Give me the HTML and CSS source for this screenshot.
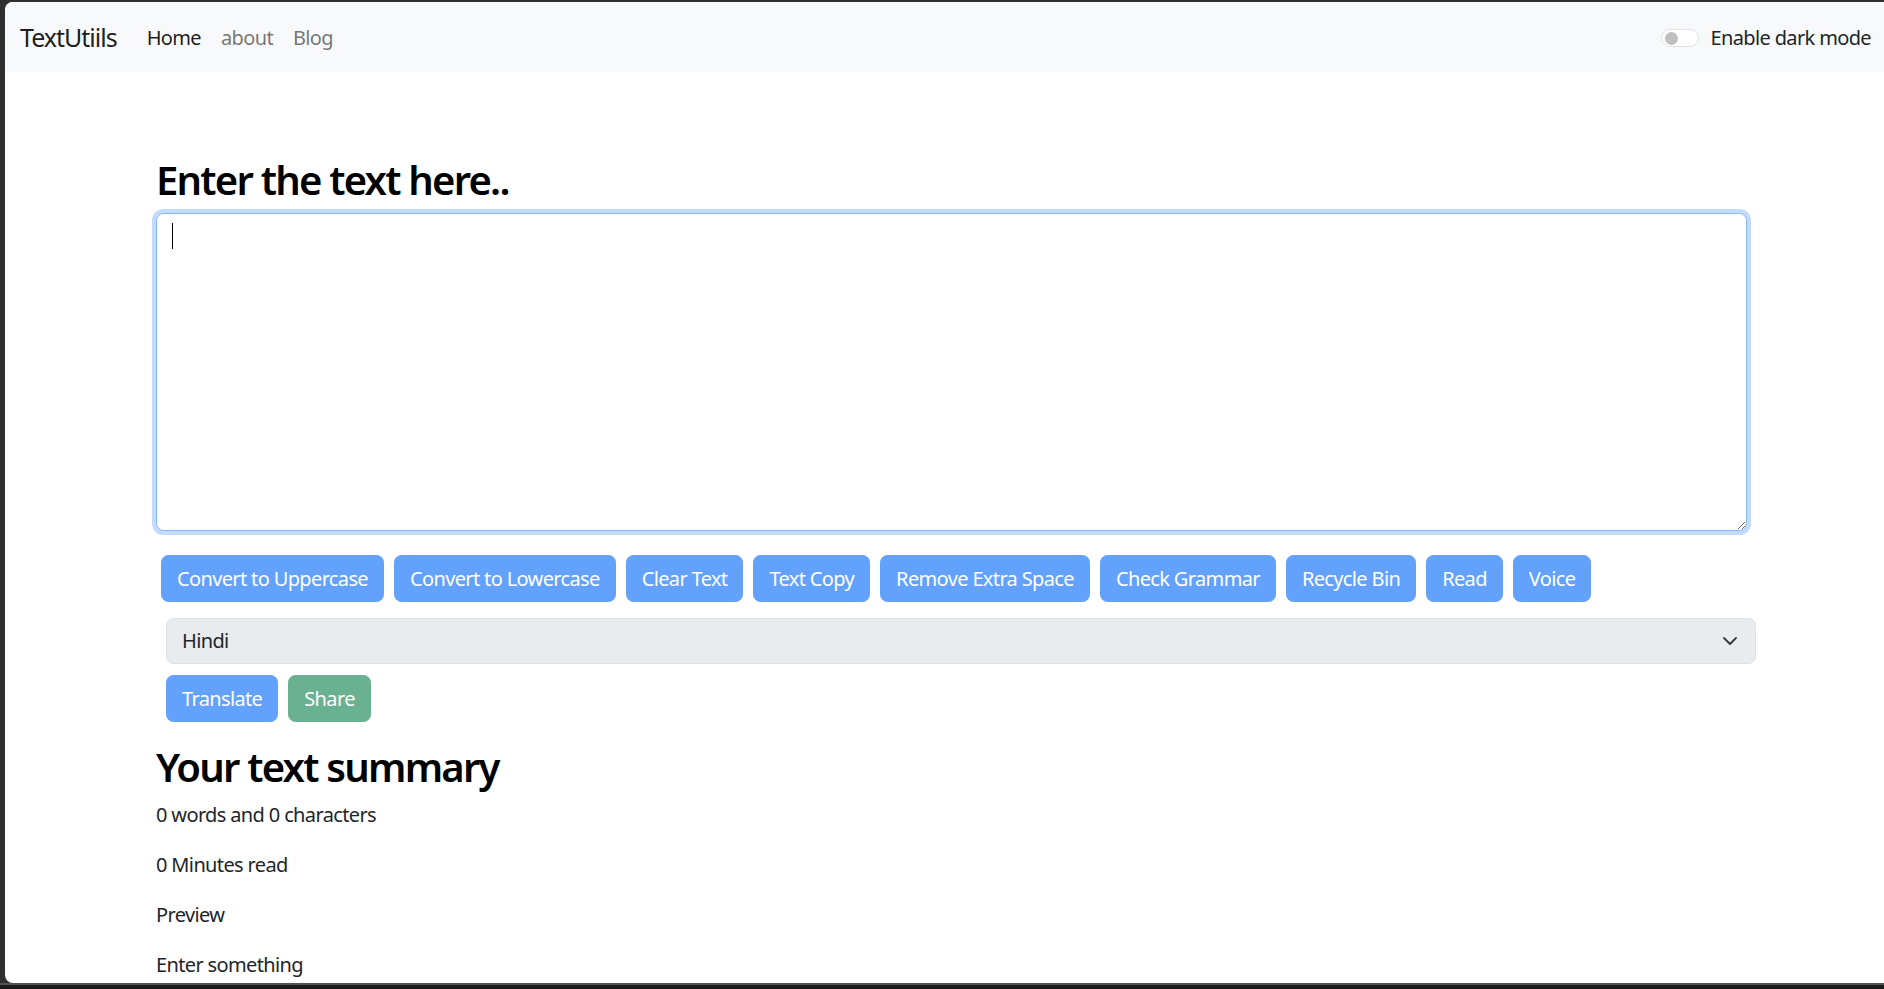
FILE: index.html
```html
<!DOCTYPE html>
<html lang="en">
<head>
<meta charset="utf-8">
<title>TextUtiils</title>
<link rel="stylesheet" href="styles.css">
</head>
<body>
<div class="window">
  <nav class="navbar">
    <div class="nav-left">
      <a class="brand" href="#">TextUtiils</a>
      <ul class="nav-links">
        <li><a class="active" href="#">Home</a></li>
        <li><a href="#">about</a></li>
        <li><a href="#">Blog</a></li>
      </ul>
    </div>
    <div class="dark-toggle">
      <span class="switch"><span class="knob"></span></span>
      <label class="switch-label">Enable dark mode</label>
    </div>
  </nav>
  <main class="container">
    <h2 class="title">Enter the text here..</h2>
    <div class="ta-wrap">
      <textarea class="ta" rows="10"></textarea>
      <span class="caret"></span>
    </div>
    <div class="btn-row">
      <button class="btn" disabled>Convert to Uppercase</button>
      <button class="btn" disabled>Convert to Lowercase</button>
      <button class="btn" disabled>Clear Text</button>
      <button class="btn" disabled>Text Copy</button>
      <button class="btn" disabled>Remove Extra Space</button>
      <button class="btn" disabled>Check Grammar</button>
      <button class="btn" disabled>Recycle Bin</button>
      <button class="btn" disabled>Read</button>
      <button class="btn" disabled>Voice</button>
    </div>
    <div class="select-wrap">
      <select class="select" disabled><option>Hindi</option></select>
      <svg class="chev" width="14" height="8" viewBox="0 0 14 8"><path d="M1 1 L7 7 L13 1" fill="none" stroke="#343a40" stroke-width="1.8" stroke-linecap="round" stroke-linejoin="round"/></svg>
    </div>
    <div class="btn-row2">
      <button class="btn" disabled>Translate</button>
      <button class="btn btn-green" disabled>Share</button>
    </div>
    <h2 class="title summary">Your text summary</h2>
    <p>0 words and 0 characters</p>
    <p>0 Minutes read</p>
    <p>Preview</p>
    <p>Enter something</p>
  </main>
</div>
<div class="bottom-bar"></div>
</body>
</html>
```
FILE: styles.css
```css
* { box-sizing: border-box; }
html, body { margin: 0; height: 100%; }
body {
  background: #2f2f2f;
  overflow: hidden;
  padding: 2px 0 0 5px;
  font-family: "Noto Sans", "Open Sans", sans-serif;
  font-size: 20px;
  line-height: 1.5;
  color: #212529;
  letter-spacing: -0.032em;
}
.window {
  height: 981px;
  background: #fff;
  border-radius: 8px 0 0 8px;
  overflow: hidden;
}
.bottom-bar {
  height: 6px;
  margin-left: -5px;
  border-top: 2px solid #525252;
  background: #1b1b1b;
}
.navbar {
  height: 70px;
  background: #f8f9fa;
  display: flex;
  align-items: center;
  justify-content: space-between;
  padding: 2px 13px 0 15px;
}
.nav-left { display: flex; align-items: center; }
.brand {
  font-size: 25px;
  letter-spacing: -0.04em;
  color: rgba(0,0,0,.9);
  text-decoration: none;
  margin-right: 20px;
}
.nav-links { display: flex; list-style: none; margin: 0; padding: 0; }
.nav-links a {
  display: block;
  padding: 7.5px 10px;
  color: rgba(0,0,0,.55);
  text-decoration: none;
}
.nav-links a.active { color: rgba(0,0,0,.9); }
.dark-toggle { display: flex; align-items: center; }
.switch {
  position: relative;
  width: 38px;
  height: 18px;
  border: 1px solid #dee2e6;
  border-radius: 9px;
  background: #fff;
  margin-right: 12px;
}
.knob {
  position: absolute;
  left: 3px;
  top: 2px;
  width: 13px;
  height: 13px;
  border-radius: 50%;
  background: #bfbfbf;
}
.switch-label { color: #212529; }
.container {
  width: 1591px;
  margin-left: 151px;
  padding-top: 84px;
}
.title {
  font-size: 40px;
  font-weight: 600;
  line-height: 1.2;
  letter-spacing: -0.044em;
  margin: 0 0 9px;
  color: #000;
}
.ta-wrap { position: relative; }
.ta {
  display: block;
  width: 100%;
  height: 318px;
  padding: 7.5px 15px;
  border: 1px solid #86b7fe;
  border-radius: 7.5px;
  box-shadow: 0 0 0 4px rgba(13,110,253,.25);
  font: inherit;
  resize: vertical;
  outline: none;
  background: #fff;
}
.caret {
  position: absolute;
  left: 16px;
  top: 10px;
  width: 1px;
  height: 26px;
  background: #000;
}
.btn-row { display: flex; gap: 10px; margin: 24px 0 0 5px; }
.btn {
  font: inherit;
  letter-spacing: inherit;
  line-height: 30px;
  padding: 7.5px 15px;
  border: 1px solid #62a2fd;
  background: #62a2fd;
  color: #fff;
  border-radius: 7.5px;
}
.btn-green { background: #69b190; border-color: #69b190; }
.select-wrap { position: relative; margin: 16px 0 0 10px; width: 1590px; }
.select {
  appearance: none;
  -webkit-appearance: none;
  display: block;
  width: 100%;
  height: 46px;
  padding: 7px 50px 7px 15px;
  font: inherit;
  letter-spacing: inherit;
  color: #212529;
  background: #e9ecef;
  border: 1px solid #dee2e6;
  border-radius: 7.5px;
  opacity: 1;
}
.chev { position: absolute; right: 19px; top: 19px; }
.btn-row2 { display: flex; gap: 10px; margin: 11px 0 0 10px; }
.summary { margin-top: 21px; }
p { margin: 0 0 20px; }
```
